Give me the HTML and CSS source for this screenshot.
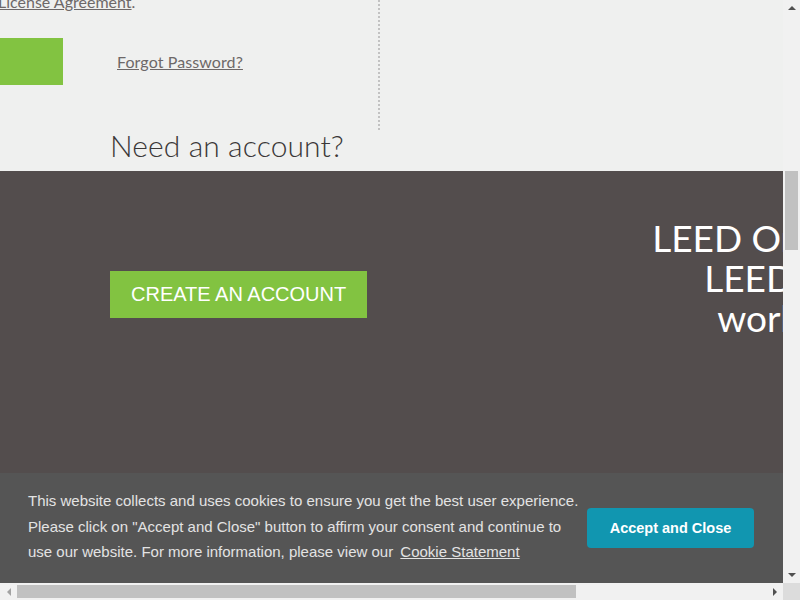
FILE: index.html
```html
<!DOCTYPE html>
<html lang="en">
<head>
<meta charset="utf-8">
<title>LEED Online – Sign in</title>
<link rel="stylesheet" href="styles.css">
</head>
<body>
<div class="screen">
  <div class="viewport">
    <div class="page">
      <section class="login">
        <div class="login-row">
          <div class="form-col">
            <p class="agree"><a href="#" class="link">License Agreement</a>.</p>
            <div class="actions">
              <button class="btn-signin" type="button" aria-label="Sign in"></button>
              <a href="#" class="link forgot">Forgot Password?</a>
            </div>
          </div>
          <div class="side-col"></div>
        </div>
        <h2 class="need">Need an account?</h2>
      </section>
      <section class="signup">
        <a href="#" class="btn-create">CREATE AN ACCOUNT</a>
        <div class="promo">
          <span class="promo-line l1">LEED Online is where</span>
          <span class="promo-line l2">LEED projects get</span>
          <span class="promo-line l3">work done.</span>
        </div>
      </section>
    </div>
    <div class="cookie">
      <p class="cookie-text">This website collects and uses cookies to ensure you get the best user experience. Please click on "Accept and Close" button to affirm your consent and continue to use our website. For more information, please view our <a href="#" class="cookie-link">Cookie Statement</a></p>
      <button class="cookie-btn" type="button">Accept and Close</button>
    </div>
  </div>
  <div class="vscroll">
    <span class="sb-btn"><span class="tri tri-up"></span></span>
    <div class="vtrack"><span class="vthumb"></span></div>
    <span class="sb-btn"><span class="tri tri-down"></span></span>
  </div>
  <div class="hscroll">
    <span class="sb-btn"><span class="tri tri-left"></span></span>
    <div class="htrack"><span class="hthumb"></span></div>
    <span class="sb-btn"><span class="tri tri-right"></span></span>
  </div>
  <div class="corner"></div>
</div>
</body>
</html>
```

FILE: styles.css
```css
* { box-sizing: border-box; }
html, body { margin: 0; padding: 0; }
body { width: 800px; height: 600px; overflow: hidden; background: #f1f1f1; }

.screen {
  display: grid;
  grid-template-columns: 783px 17px;
  grid-template-rows: 583px 17px;
  width: 800px;
  height: 600px;
}

.viewport {
  position: relative;
  overflow: hidden;
  background: #eff0ef;
}

.page { width: 783px; }

/* ---------- login ---------- */
.login { height: 171px; }
.login-row { display: flex; height: 130px; }
.form-col {
  width: 380px;
  border-right: 2px dotted #c2c2c2;
}
.agree {
  margin: -9px 0 0 -2px;
  font: 16px/22px "Lato", sans-serif;
  color: #6d6868;
  white-space: nowrap;
}
.link { color: #6d6868; text-decoration: underline; }
.actions {
  display: flex;
  align-items: center;
  gap: 54px;
  margin-top: 25px;
}
.btn-signin {
  width: 63px;
  height: 47px;
  border: 0;
  padding: 0;
  background: #82c341;
}
.forgot { font: 16px/20px "Lato", sans-serif; letter-spacing: 0.1px; }
.side-col { flex: 1; }

.need {
  margin: 0 0 0 110px;
  font: 300 30px/30px "Lato", sans-serif;
  color: #3b3838;
  letter-spacing: 0.1px;
}

/* ---------- signup band ---------- */
.signup {
  height: 420px;
  background: #534d4d;
  display: flex;
  align-items: flex-start;
  padding-left: 110px;
}
.btn-create {
  margin-top: 100px;
  padding: 12px 21px;
  background: #82c341;
  color: #fff;
  font: 20px/23px "Liberation Sans", Arial, sans-serif;
  text-decoration: none;
  white-space: nowrap;
}
.promo {
  display: flex;
  flex-direction: column;
  margin: 47px 0 0 285px;
  color: #fff;
  font: 400 37px/40px "Lato", sans-serif;
  white-space: nowrap;
}
.l2 { margin-left: 52px; }
.l3 { margin-left: 65px; }

/* ---------- cookie banner ---------- */
.cookie {
  position: absolute;
  left: 0;
  right: 0;
  bottom: 0;
  height: 110px;
  background: #555555;
  display: flex;
  align-items: center;
  padding: 0 29px 3px 28px;
  gap: 6px;
}
.cookie-text {
  margin: 0;
  width: 553px;
  flex: none;
  font: 15px/25.5px "Liberation Sans", Arial, sans-serif;
  color: #e3e3e3;
}
.cookie-link { color: #e3e3e3; text-decoration: underline; margin-left: 3px; }
.cookie-btn {
  margin: 3px 0 0 auto;
  width: 167px;
  height: 40px;
  border: 0;
  border-radius: 4px;
  background: #1196b0;
  color: #fff;
  font: bold 14.5px "Liberation Sans", Arial, sans-serif;
}

/* ---------- scrollbars ---------- */
.vscroll, .hscroll { background: #f1f1f1; display: flex; }
.vscroll { flex-direction: column; }
.sb-btn {
  width: 17px;
  height: 17px;
  flex: none;
  display: flex;
  align-items: center;
  justify-content: center;
}
.vtrack { flex: 1; padding: 154px 2px 0; }
.vthumb { display: block; width: 13px; height: 79px; background: #c1c1c1; }
.htrack { flex: 1; padding: 2px 0; }
.hthumb { display: block; width: 559px; height: 13px; background: #c1c1c1; }
.corner { background: #dcdcdc; }

.tri { width: 0; height: 0; border: 4px solid transparent; }
.tri-up { border-bottom: 4px solid #505050; border-top-width: 0; margin-top: -1px; }
.tri-down { border-top: 4px solid #505050; border-bottom-width: 0; margin-top: 1px; }
.tri-left { border-right: 4px solid #a3a3a3; border-left-width: 0; }
.tri-right { border-left: 4px solid #505050; border-right-width: 0; }
```
